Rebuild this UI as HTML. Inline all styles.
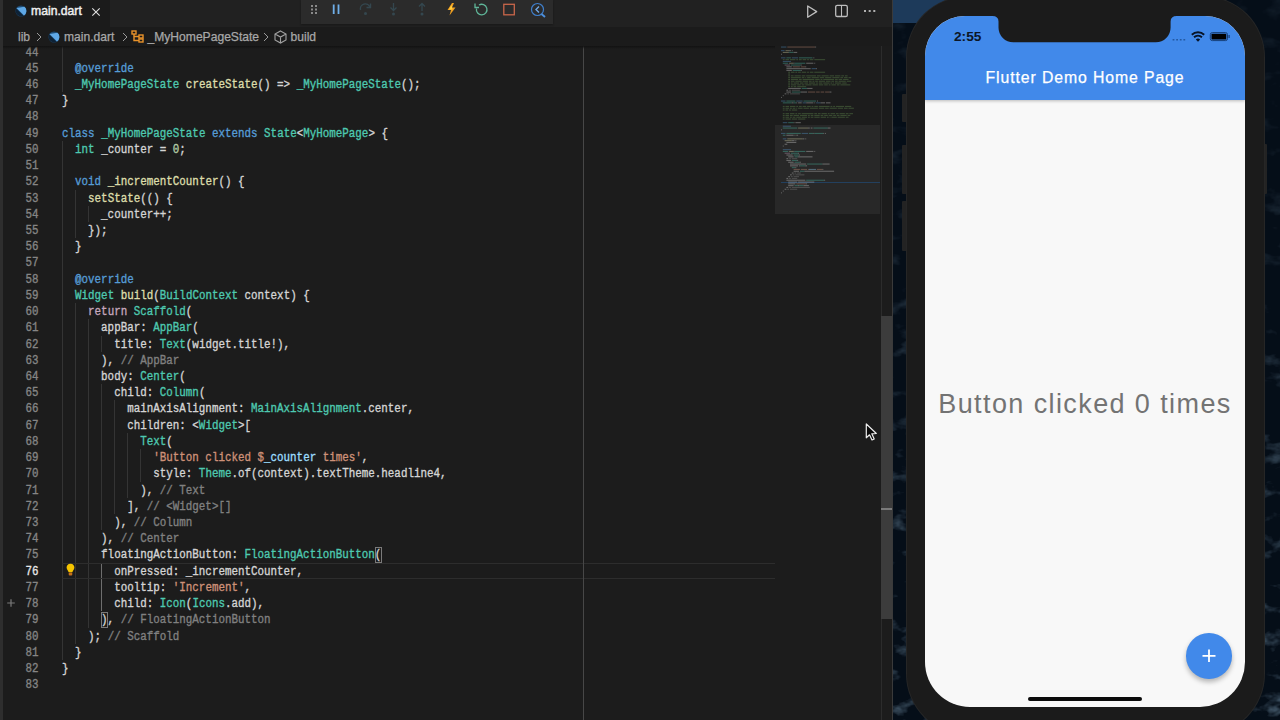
<!DOCTYPE html>
<html><head><meta charset="utf-8">
<style>
html,body{margin:0;padding:0;width:1280px;height:720px;overflow:hidden;background:#07131f;}
*{box-sizing:border-box;}
#desk{position:absolute;left:893px;top:0;width:387px;height:720px;background:#071422;overflow:hidden;}
#vsc{position:absolute;left:0;top:0;width:893px;height:720px;background:#1c1c1c;overflow:hidden;font-family:"Liberation Sans",sans-serif;}
#lstrip{position:absolute;left:0;top:0;width:3px;height:720px;background:#2e2e2e;}
#tabbar{position:absolute;left:3px;top:0;width:890px;height:27px;background:#212121;}
#tab{position:absolute;left:3px;top:0;width:107px;height:27px;background:#1b1b1b;}
#tab .name{position:absolute;left:28px;top:3.5px;font-size:12.2px;color:#eeeeee;font-weight:normal;-webkit-text-stroke:0.45px;letter-spacing:0px;}
#crumb{position:absolute;left:3px;top:27px;width:890px;height:19px;background:#1b1b1b;}
.crumbtxt{position:absolute;top:2.5px;font-size:12.1px;color:#a8a8a8;white-space:pre;-webkit-text-stroke:0.25px;}
#dbg{position:absolute;left:301px;top:0;width:252px;height:23.5px;background:#2b2b2b;box-shadow:0 1px 2px rgba(0,0,0,.3);}
#editor{position:absolute;left:0;top:46px;width:893px;height:674px;background:#1c1c1c;overflow:hidden;}
#code{position:absolute;left:0;top:-46px;width:893px;height:720px;}
.ln{position:absolute;left:62px;height:16.22px;line-height:16.22px;transform:translateY(1.1px) scaleY(1.17);transform-origin:0 58%;font-family:"Liberation Mono",monospace;font-size:10.86px;color:#d4d4d4;white-space:pre;-webkit-text-stroke:0.3px;}
.num{position:absolute;left:0;width:38.5px;transform:translateY(1.1px) scaleY(1.17);transform-origin:0 58%;text-align:right;height:16.22px;line-height:16.22px;font-family:"Liberation Mono",monospace;font-size:10.83px;color:#858585;-webkit-text-stroke:0.3px;}
.num.cur{color:#e6e6e6;}
.k{color:#569cd6}.c{color:#c5a7bd}.t{color:#4ec9b0}.f{color:#dcdcaa}.s{color:#ce9178}.v{color:#9cdcfe}.g{color:#808080}.m{color:#6a9955}.n{color:#b5cea8}
.ig{position:absolute;width:1px;height:16.22px;background:#343434;}
.ig.act{background:#6e6e6e;}
#curline{position:absolute;left:62px;top:562.6px;width:713px;height:16.22px;border-top:1px solid #2d2d2d;border-bottom:1px solid #2d2d2d;}
.bbox{position:absolute;width:6.8px;height:16px;border:1px solid #7a7a7a;}
#ruler{position:absolute;left:583px;top:46px;width:1px;height:674px;background:#474747;}
#shadow{position:absolute;left:0;top:46px;width:775px;height:3px;background:linear-gradient(#121212,rgba(28,28,28,0));}
#mmslider{position:absolute;left:775px;top:124.7px;width:105px;height:89px;background:rgba(255,255,255,0.055);}
#mmcur{position:absolute;left:781px;top:181.6px;width:99px;height:1.3px;background:#23405e;}
#sbline{position:absolute;left:880.5px;top:46px;width:1px;height:674px;background:#2c2c2c;}
#sbthumb{position:absolute;left:881px;top:315.7px;width:11px;height:303px;background:#3c3c3c;}
#sbcursor{position:absolute;left:881px;top:508px;width:11px;height:1.5px;background:#7a7a7a;}
#redge{position:absolute;left:892px;top:0;width:1px;height:720px;background:#3a3a3a;}
#phone{position:absolute;left:907px;top:-3.5px;width:356.5px;height:737.5px;border-radius:60px;background:#1b1b1b;box-shadow:0 0 0 1px #262626;}
.btn{position:absolute;background:#232323;border-radius:1px;}
#screen{position:absolute;left:925px;top:15.5px;width:320px;height:691.3px;border-radius:40px 40px 45px 45px;background:#f8f8f8;overflow:hidden;}
#appbar{position:absolute;left:0;top:0;width:100%;height:84px;background:#4189ea;box-shadow:0 1px 3px rgba(0,0,0,.25);}
#notch{position:absolute;left:72px;top:-2px;width:175.6px;height:28.3px;background:#1b1b1b;border-radius:0 0 17px 17px;}
#title{position:absolute;left:0;width:100%;top:53px;text-align:center;color:#fff;font-size:15.8px;letter-spacing:0.9px;-webkit-text-stroke:0.25px;font-family:"Liberation Sans",sans-serif;}
#time{position:absolute;left:29px;top:13.2px;font-size:13.7px;font-weight:bold;color:#0c1626;font-family:"Liberation Sans",sans-serif;}
#msg{position:absolute;left:0;width:100%;top:373px;text-align:center;color:#737373;font-size:27px;letter-spacing:1.4px;font-family:"Liberation Sans",sans-serif;}
#fab{position:absolute;left:261px;top:617.8px;width:45.6px;height:45.6px;border-radius:50%;background:#4189ea;box-shadow:0 3px 5px rgba(0,0,0,.28);}
#home{position:absolute;left:103.4px;top:681px;width:113.5px;height:4px;border-radius:2px;background:#0a0a0a;}
#cursor{position:absolute;left:864px;top:421.8px;}
</style></head><body>
<div id="desk">
  <svg width="387" height="720" style="position:absolute;left:0;top:0">
    <defs>
      <filter id="tex" x="0" y="0" width="100%" height="100%">
        <feTurbulence type="fractalNoise" baseFrequency="0.035 0.06" numOctaves="4" seed="7" result="n"/>
        <feColorMatrix in="n" type="matrix" values="0 0 0 0 0.16  0 0 0 0 0.26  0 0 0 0 0.36  0 0 0 3.2 -1.75"/>
      </filter>
      <filter id="bl" x="-50%" y="-50%" width="200%" height="200%"><feGaussianBlur stdDeviation="6"/></filter>
    </defs>
    <rect x="0" y="0" width="387" height="720" fill="#050e18"/>
    <mask id="mk"><rect x="0" y="0" width="387" height="720" fill="url(#mg)"/></mask>
    <linearGradient id="mg" x1="0" y1="0" x2="0" y2="1"><stop offset="0" stop-color="#fff" stop-opacity="0.15"/><stop offset="0.4" stop-color="#fff" stop-opacity="0.35"/><stop offset="0.75" stop-color="#fff" stop-opacity="0.8"/><stop offset="1" stop-color="#fff" stop-opacity="1"/></linearGradient>
    <rect x="0" y="0" width="387" height="720" filter="url(#tex)" opacity="0.7" mask="url(#mk)"/>
    <polygon points="0,0 120,0 60,23 0,23" fill="#1d3a5a"/>
  </svg>
</div>
<div id="vsc">
  <div id="tabbar"></div>
  <div id="tab">
    <svg style="position:absolute;left:12px;top:5px" width="12" height="12" viewBox="0 0 12 12">
      <circle cx="6" cy="6" r="5.5" fill="#1d4a72"/>
      <path d="M1.5 3 L9 10.5 A5.5 5.5 0 0 0 9.5 1.8 Z" fill="#5fa8e6"/>
      <path d="M1.2 3.5 L8.5 10.8 A5.5 5.5 0 0 1 1.2 3.5Z" fill="#0e2236"/>
    </svg>
    <div class="name">main.dart</div>
    <svg style="position:absolute;left:88px;top:6.5px" width="10" height="10" viewBox="0 0 10 10"><path d="M1.3 1.3L8.7 8.7M8.7 1.3L1.3 8.7" stroke="#e0e0e0" stroke-width="1.1"/></svg>
  </div>
  <div id="dbg">
    <svg width="252" height="24" style="position:absolute;left:0;top:0">
      <g fill="#8a8a8a"><rect x="10" y="5" width="2" height="2"/><rect x="14" y="5" width="2" height="2"/><rect x="10" y="8.5" width="2" height="2"/><rect x="14" y="8.5" width="2" height="2"/><rect x="10" y="12" width="2" height="2"/><rect x="14" y="12" width="2" height="2"/></g>
      <g fill="#6faee8"><rect x="31.8" y="4.5" width="1.8" height="9.5"/><rect x="36.6" y="4.5" width="1.8" height="9.5"/></g>
      <g stroke="#34474f" fill="none" stroke-width="1.4"><path d="M59.5 10 A5 5 0 0 1 69 7"/><path d="M69.5 3.5 V7.5 H65.5"/></g><circle cx="64.5" cy="13.5" r="1.5" fill="#34474f"/>
      <g stroke="#34474f" fill="none" stroke-width="1.3"><path d="M92.5 3 V10 M89.5 7.5 L92.5 10.5 L95.5 7.5"/></g><circle cx="92.5" cy="14" r="1.5" fill="#34474f"/>
      <g stroke="#34474f" fill="none" stroke-width="1.3"><path d="M121 11 V4 M118 6.5 L121 3.5 L124 6.5"/></g><circle cx="121" cy="14" r="1.5" fill="#34474f"/>
      <path d="M151 3 L146.5 10 H150 L148.5 15.5 L154.5 7.5 H151 L153 3Z" fill="#f0a020"/>
      <path d="M150.5 5 L148 9.5 H151.5Z" fill="#ffd040"/>
      <g stroke="#5fb598" fill="none" stroke-width="1.3"><path d="M175.5 8.5 A5.3 5.3 0 1 0 178 5"/><path d="M174 3.5 V7.5 H178"/></g>
      <rect x="202.8" y="4.3" width="10.5" height="10.5" fill="none" stroke="#c9664a" stroke-width="1.3"/>
      <circle cx="236.5" cy="9.5" r="6" fill="none" stroke="#3f7fcc" stroke-width="1.2"/>
      <path d="M238 6.5 L235 9.5 L238 12.5" stroke="#6fa8e8" fill="none" stroke-width="1.4"/>
      <path d="M240.5 14 L244 17" stroke="#4c8fdc" stroke-width="2"/>
    </svg>
  </div>
  <div id="crumb">
    <div class="crumbtxt" style="left:15px">lib</div>
    <svg style="position:absolute;left:32px;top:5px" width="8" height="10" viewBox="0 0 8 10"><path d="M2 1 L6 5 L2 9" stroke="#9a9a9a" fill="none" stroke-width="1"/></svg>
    <svg style="position:absolute;left:45px;top:4px" width="12" height="12" viewBox="0 0 12 12">
      <circle cx="6" cy="6" r="5.5" fill="#1d4a72"/>
      <path d="M1.5 3 L9 10.5 A5.5 5.5 0 0 0 9.5 1.8 Z" fill="#5fa8e6"/>
      <path d="M1.2 3.5 L8.5 10.8 A5.5 5.5 0 0 1 1.2 3.5Z" fill="#0e2236"/>
    </svg>
    <div class="crumbtxt" style="left:61px">main.dart</div>
    <svg style="position:absolute;left:118px;top:5px" width="8" height="10" viewBox="0 0 8 10"><path d="M2 1 L6 5 L2 9" stroke="#9a9a9a" fill="none" stroke-width="1"/></svg>
    <svg style="position:absolute;left:128px;top:3px" width="14" height="13" viewBox="0 0 14 13">
      <g stroke="#e8922a" fill="none" stroke-width="1.4"><rect x="1" y="1" width="4" height="3"/><rect x="8" y="5" width="4" height="3"/><rect x="8" y="9" width="4" height="3"/><path d="M3 4 V10.5 H8 M3 6.5 H8"/></g>
    </svg>
    <div class="crumbtxt" style="left:144.5px">_MyHomePageState</div>
    <svg style="position:absolute;left:259px;top:5px" width="8" height="10" viewBox="0 0 8 10"><path d="M2 1 L6 5 L2 9" stroke="#9a9a9a" fill="none" stroke-width="1"/></svg>
    <svg style="position:absolute;left:271px;top:3px" width="13" height="14" viewBox="0 0 13 14">
      <g stroke="#a0a0a0" fill="none" stroke-width="1.1"><path d="M6.5 1 L12 4 V10 L6.5 13 L1 10 V4Z M1 4 L6.5 7 L12 4 M6.5 7 V13"/></g>
    </svg>
    <div class="crumbtxt" style="left:287.5px">build</div>
  </div>
  <div id="tabicons">
    <svg width="80" height="24" style="position:absolute;left:800px;top:0">
      <path d="M7.7 6 L16.7 11.6 L7.7 17.2Z" fill="none" stroke="#bdbdbd" stroke-width="1.3" stroke-linejoin="round"/>
      <rect x="35.7" y="5.3" width="11.6" height="11.2" rx="1.6" fill="none" stroke="#bdbdbd" stroke-width="1.3"/>
      <path d="M41.5 5.3 V16.5" stroke="#bdbdbd" stroke-width="1.1"/>
      <g fill="#b0b0b0"><rect x="64" y="10" width="2" height="2"/><rect x="68.7" y="10" width="2" height="2"/><rect x="73.3" y="10" width="2" height="2"/></g>
    </svg>
  </div>
  <div id="editor"><div id="code">
<div class="ig" style="left:62.0px;top:43.60px"></div>
<div class="ig" style="left:62.0px;top:59.82px"></div>
<div class="ig" style="left:62.0px;top:76.04px"></div>
<div class="ig" style="left:62.0px;top:140.92px"></div>
<div class="ig" style="left:62.0px;top:157.14px"></div>
<div class="ig" style="left:62.0px;top:173.36px"></div>
<div class="ig" style="left:62.0px;top:189.58px"></div>
<div class="ig" style="left:75.0px;top:189.58px"></div>
<div class="ig" style="left:62.0px;top:205.80px"></div>
<div class="ig" style="left:75.0px;top:205.80px"></div>
<div class="ig" style="left:88.0px;top:205.80px"></div>
<div class="ig" style="left:62.0px;top:222.02px"></div>
<div class="ig" style="left:75.0px;top:222.02px"></div>
<div class="ig" style="left:62.0px;top:238.24px"></div>
<div class="ig" style="left:62.0px;top:254.46px"></div>
<div class="ig" style="left:62.0px;top:270.68px"></div>
<div class="ig" style="left:62.0px;top:286.90px"></div>
<div class="ig" style="left:62.0px;top:303.12px"></div>
<div class="ig" style="left:75.0px;top:303.12px"></div>
<div class="ig" style="left:62.0px;top:319.34px"></div>
<div class="ig" style="left:75.0px;top:319.34px"></div>
<div class="ig" style="left:88.0px;top:319.34px"></div>
<div class="ig" style="left:62.0px;top:335.56px"></div>
<div class="ig" style="left:75.0px;top:335.56px"></div>
<div class="ig" style="left:88.0px;top:335.56px"></div>
<div class="ig" style="left:101.0px;top:335.56px"></div>
<div class="ig" style="left:62.0px;top:351.78px"></div>
<div class="ig" style="left:75.0px;top:351.78px"></div>
<div class="ig" style="left:88.0px;top:351.78px"></div>
<div class="ig" style="left:62.0px;top:368.00px"></div>
<div class="ig" style="left:75.0px;top:368.00px"></div>
<div class="ig" style="left:88.0px;top:368.00px"></div>
<div class="ig" style="left:62.0px;top:384.22px"></div>
<div class="ig" style="left:75.0px;top:384.22px"></div>
<div class="ig" style="left:88.0px;top:384.22px"></div>
<div class="ig" style="left:101.0px;top:384.22px"></div>
<div class="ig" style="left:62.0px;top:400.44px"></div>
<div class="ig" style="left:75.0px;top:400.44px"></div>
<div class="ig" style="left:88.0px;top:400.44px"></div>
<div class="ig" style="left:101.0px;top:400.44px"></div>
<div class="ig" style="left:114.0px;top:400.44px"></div>
<div class="ig" style="left:62.0px;top:416.66px"></div>
<div class="ig" style="left:75.0px;top:416.66px"></div>
<div class="ig" style="left:88.0px;top:416.66px"></div>
<div class="ig" style="left:101.0px;top:416.66px"></div>
<div class="ig" style="left:114.0px;top:416.66px"></div>
<div class="ig" style="left:62.0px;top:432.88px"></div>
<div class="ig" style="left:75.0px;top:432.88px"></div>
<div class="ig" style="left:88.0px;top:432.88px"></div>
<div class="ig" style="left:101.0px;top:432.88px"></div>
<div class="ig" style="left:114.0px;top:432.88px"></div>
<div class="ig" style="left:127.0px;top:432.88px"></div>
<div class="ig" style="left:62.0px;top:449.10px"></div>
<div class="ig" style="left:75.0px;top:449.10px"></div>
<div class="ig" style="left:88.0px;top:449.10px"></div>
<div class="ig" style="left:101.0px;top:449.10px"></div>
<div class="ig" style="left:114.0px;top:449.10px"></div>
<div class="ig" style="left:127.0px;top:449.10px"></div>
<div class="ig" style="left:140.0px;top:449.10px"></div>
<div class="ig" style="left:62.0px;top:465.32px"></div>
<div class="ig" style="left:75.0px;top:465.32px"></div>
<div class="ig" style="left:88.0px;top:465.32px"></div>
<div class="ig" style="left:101.0px;top:465.32px"></div>
<div class="ig" style="left:114.0px;top:465.32px"></div>
<div class="ig" style="left:127.0px;top:465.32px"></div>
<div class="ig" style="left:140.0px;top:465.32px"></div>
<div class="ig" style="left:62.0px;top:481.54px"></div>
<div class="ig" style="left:75.0px;top:481.54px"></div>
<div class="ig" style="left:88.0px;top:481.54px"></div>
<div class="ig" style="left:101.0px;top:481.54px"></div>
<div class="ig" style="left:114.0px;top:481.54px"></div>
<div class="ig" style="left:127.0px;top:481.54px"></div>
<div class="ig" style="left:62.0px;top:497.76px"></div>
<div class="ig" style="left:75.0px;top:497.76px"></div>
<div class="ig" style="left:88.0px;top:497.76px"></div>
<div class="ig" style="left:101.0px;top:497.76px"></div>
<div class="ig" style="left:114.0px;top:497.76px"></div>
<div class="ig" style="left:62.0px;top:513.98px"></div>
<div class="ig" style="left:75.0px;top:513.98px"></div>
<div class="ig" style="left:88.0px;top:513.98px"></div>
<div class="ig" style="left:101.0px;top:513.98px"></div>
<div class="ig" style="left:62.0px;top:530.20px"></div>
<div class="ig" style="left:75.0px;top:530.20px"></div>
<div class="ig" style="left:88.0px;top:530.20px"></div>
<div class="ig" style="left:62.0px;top:546.42px"></div>
<div class="ig" style="left:75.0px;top:546.42px"></div>
<div class="ig" style="left:88.0px;top:546.42px"></div>
<div class="ig" style="left:62.0px;top:562.64px"></div>
<div class="ig" style="left:75.0px;top:562.64px"></div>
<div class="ig" style="left:88.0px;top:562.64px"></div>
<div class="ig act" style="left:101.0px;top:562.64px"></div>
<div class="ig" style="left:62.0px;top:578.86px"></div>
<div class="ig" style="left:75.0px;top:578.86px"></div>
<div class="ig" style="left:88.0px;top:578.86px"></div>
<div class="ig act" style="left:101.0px;top:578.86px"></div>
<div class="ig" style="left:62.0px;top:595.08px"></div>
<div class="ig" style="left:75.0px;top:595.08px"></div>
<div class="ig" style="left:88.0px;top:595.08px"></div>
<div class="ig act" style="left:101.0px;top:595.08px"></div>
<div class="ig" style="left:62.0px;top:611.30px"></div>
<div class="ig" style="left:75.0px;top:611.30px"></div>
<div class="ig" style="left:88.0px;top:611.30px"></div>
<div class="ig" style="left:62.0px;top:627.52px"></div>
<div class="ig" style="left:75.0px;top:627.52px"></div>
<div class="ig" style="left:62.0px;top:643.74px"></div>
<div id="curline"></div>
<div class="bbox" style="left:374.8px;top:546.6px"></div>
<div class="bbox" style="left:101.3px;top:611.5px"></div>
<div class="ln" style="top:43.60px"></div>
<div class="num" style="top:43.60px">44</div>
<div class="ln" style="top:59.82px">  <span class="k">@override</span></div>
<div class="num" style="top:59.82px">45</div>
<div class="ln" style="top:76.04px">  <span class="t">_MyHomePageState</span> <span class="f">createState</span>() =&gt; <span class="t">_MyHomePageState</span>();</div>
<div class="num" style="top:76.04px">46</div>
<div class="ln" style="top:92.26px">}</div>
<div class="num" style="top:92.26px">47</div>
<div class="ln" style="top:108.48px"></div>
<div class="num" style="top:108.48px">48</div>
<div class="ln" style="top:124.70px"><span class="k">class</span> <span class="t">_MyHomePageState</span> <span class="k">extends</span> <span class="t">State</span>&lt;<span class="t">MyHomePage</span>&gt; {</div>
<div class="num" style="top:124.70px">49</div>
<div class="ln" style="top:140.92px">  <span class="t">int</span> _counter = <span class="n">0</span>;</div>
<div class="num" style="top:140.92px">50</div>
<div class="ln" style="top:157.14px"></div>
<div class="num" style="top:157.14px">51</div>
<div class="ln" style="top:173.36px">  <span class="k">void</span> <span class="f">_incrementCounter</span>() {</div>
<div class="num" style="top:173.36px">52</div>
<div class="ln" style="top:189.58px">    <span class="f">setState</span>(() {</div>
<div class="num" style="top:189.58px">53</div>
<div class="ln" style="top:205.80px">      _counter++;</div>
<div class="num" style="top:205.80px">54</div>
<div class="ln" style="top:222.02px">    });</div>
<div class="num" style="top:222.02px">55</div>
<div class="ln" style="top:238.24px">  }</div>
<div class="num" style="top:238.24px">56</div>
<div class="ln" style="top:254.46px"></div>
<div class="num" style="top:254.46px">57</div>
<div class="ln" style="top:270.68px">  <span class="k">@override</span></div>
<div class="num" style="top:270.68px">58</div>
<div class="ln" style="top:286.90px">  <span class="t">Widget</span> <span class="f">build</span>(<span class="t">BuildContext</span> context) {</div>
<div class="num" style="top:286.90px">59</div>
<div class="ln" style="top:303.12px">    <span class="c">return</span> <span class="t">Scaffold</span>(</div>
<div class="num" style="top:303.12px">60</div>
<div class="ln" style="top:319.34px">      appBar: <span class="t">AppBar</span>(</div>
<div class="num" style="top:319.34px">61</div>
<div class="ln" style="top:335.56px">        title: <span class="t">Text</span>(widget.title!),</div>
<div class="num" style="top:335.56px">62</div>
<div class="ln" style="top:351.78px">      ), <span class="g">// AppBar</span></div>
<div class="num" style="top:351.78px">63</div>
<div class="ln" style="top:368.00px">      body: <span class="t">Center</span>(</div>
<div class="num" style="top:368.00px">64</div>
<div class="ln" style="top:384.22px">        child: <span class="t">Column</span>(</div>
<div class="num" style="top:384.22px">65</div>
<div class="ln" style="top:400.44px">          mainAxisAlignment: <span class="t">MainAxisAlignment</span>.center,</div>
<div class="num" style="top:400.44px">66</div>
<div class="ln" style="top:416.66px">          children: &lt;<span class="t">Widget</span>&gt;[</div>
<div class="num" style="top:416.66px">67</div>
<div class="ln" style="top:432.88px">            <span class="t">Text</span>(</div>
<div class="num" style="top:432.88px">68</div>
<div class="ln" style="top:449.10px">              <span class="s">&#x27;Button clicked $</span><span class="v">_counter</span><span class="s"> times&#x27;</span>,</div>
<div class="num" style="top:449.10px">69</div>
<div class="ln" style="top:465.32px">              style: <span class="t">Theme</span>.of(context).textTheme.headline4,</div>
<div class="num" style="top:465.32px">70</div>
<div class="ln" style="top:481.54px">            ), <span class="g">// Text</span></div>
<div class="num" style="top:481.54px">71</div>
<div class="ln" style="top:497.76px">          ], <span class="g">// &lt;Widget&gt;[]</span></div>
<div class="num" style="top:497.76px">72</div>
<div class="ln" style="top:513.98px">        ), <span class="g">// Column</span></div>
<div class="num" style="top:513.98px">73</div>
<div class="ln" style="top:530.20px">      ), <span class="g">// Center</span></div>
<div class="num" style="top:530.20px">74</div>
<div class="ln" style="top:546.42px">      floatingActionButton: <span class="t">FloatingActionButton</span>(</div>
<div class="num" style="top:546.42px">75</div>
<div class="ln" style="top:562.64px">        onPressed: _incrementCounter,</div>
<div class="num cur" style="top:562.64px">76</div>
<div class="ln" style="top:578.86px">        tooltip: <span class="s">&#x27;Increment&#x27;</span>,</div>
<div class="num" style="top:578.86px">77</div>
<div class="ln" style="top:595.08px">        child: <span class="t">Icon</span>(<span class="t">Icons</span>.add),</div>
<div class="num" style="top:595.08px">78</div>
<div class="ln" style="top:611.30px">      ), <span class="g">// FloatingActionButton</span></div>
<div class="num" style="top:611.30px">79</div>
<div class="ln" style="top:627.52px">    ); <span class="g">// Scaffold</span></div>
<div class="num" style="top:627.52px">80</div>
<div class="ln" style="top:643.74px">  }</div>
<div class="num" style="top:643.74px">81</div>
<div class="ln" style="top:659.96px">}</div>
<div class="num" style="top:659.96px">82</div>
<div class="ln" style="top:676.18px"></div>
<div class="num" style="top:676.18px">83</div>
  </div></div>
  <div id="ruler"></div>
  <div id="shadow"></div>
  <div id="mmslider"></div>
  <div id="mmcur"></div>
  <svg width="893" height="720" style="position:absolute;left:0;top:0;opacity:0.36">
<rect x="781.00" y="46.50" width="5.40" height="1.1" fill="#569cd6"/>
<rect x="787.30" y="46.50" width="27.90" height="1.1" fill="#ce9178"/>
<rect x="815.20" y="46.50" width="0.90" height="1.1" fill="#d4d4d4"/>
<rect x="781.00" y="50.10" width="3.60" height="1.1" fill="#569cd6"/>
<rect x="785.50" y="50.10" width="3.60" height="1.1" fill="#dcdcaa"/>
<rect x="789.10" y="50.10" width="1.80" height="1.1" fill="#d4d4d4"/>
<rect x="791.80" y="50.10" width="0.90" height="1.1" fill="#d4d4d4"/>
<rect x="782.80" y="51.90" width="5.40" height="1.1" fill="#dcdcaa"/>
<rect x="788.20" y="51.90" width="0.90" height="1.1" fill="#d4d4d4"/>
<rect x="789.10" y="51.90" width="4.50" height="1.1" fill="#4ec9b0"/>
<rect x="793.60" y="51.90" width="3.60" height="1.1" fill="#d4d4d4"/>
<rect x="781.00" y="53.70" width="0.90" height="1.1" fill="#d4d4d4"/>
<rect x="781.00" y="57.30" width="4.50" height="1.1" fill="#569cd6"/>
<rect x="786.40" y="57.30" width="4.50" height="1.1" fill="#4ec9b0"/>
<rect x="791.80" y="57.30" width="6.30" height="1.1" fill="#569cd6"/>
<rect x="799.00" y="57.30" width="13.50" height="1.1" fill="#4ec9b0"/>
<rect x="813.40" y="57.30" width="0.90" height="1.1" fill="#d4d4d4"/>
<rect x="782.80" y="59.10" width="1.80" height="1.1" fill="#6a9955"/>
<rect x="785.50" y="59.10" width="3.60" height="1.1" fill="#6a9955"/>
<rect x="790.00" y="59.10" width="5.40" height="1.1" fill="#6a9955"/>
<rect x="796.30" y="59.10" width="1.80" height="1.1" fill="#6a9955"/>
<rect x="799.00" y="59.10" width="2.70" height="1.1" fill="#6a9955"/>
<rect x="802.60" y="59.10" width="3.60" height="1.1" fill="#6a9955"/>
<rect x="807.10" y="59.10" width="1.80" height="1.1" fill="#6a9955"/>
<rect x="809.80" y="59.10" width="3.60" height="1.1" fill="#6a9955"/>
<rect x="814.30" y="59.10" width="10.80" height="1.1" fill="#6a9955"/>
<rect x="782.80" y="60.90" width="8.10" height="1.1" fill="#569cd6"/>
<rect x="782.80" y="62.70" width="5.40" height="1.1" fill="#4ec9b0"/>
<rect x="789.10" y="62.70" width="4.50" height="1.1" fill="#dcdcaa"/>
<rect x="793.60" y="62.70" width="0.90" height="1.1" fill="#d4d4d4"/>
<rect x="794.50" y="62.70" width="10.80" height="1.1" fill="#4ec9b0"/>
<rect x="806.20" y="62.70" width="7.20" height="1.1" fill="#d4d4d4"/>
<rect x="814.30" y="62.70" width="0.90" height="1.1" fill="#d4d4d4"/>
<rect x="784.60" y="64.50" width="5.40" height="1.1" fill="#c6a0c0"/>
<rect x="790.90" y="64.50" width="9.90" height="1.1" fill="#4ec9b0"/>
<rect x="800.80" y="64.50" width="0.90" height="1.1" fill="#d4d4d4"/>
<rect x="786.40" y="66.30" width="5.40" height="1.1" fill="#d4d4d4"/>
<rect x="792.70" y="66.30" width="7.20" height="1.1" fill="#ce9178"/>
<rect x="800.80" y="66.30" width="4.50" height="1.1" fill="#ce9178"/>
<rect x="805.30" y="66.30" width="0.90" height="1.1" fill="#d4d4d4"/>
<rect x="786.40" y="68.10" width="24.30" height="1.1" fill="#d4d4d4"/>
<rect x="811.60" y="68.10" width="4.50" height="1.1" fill="#569cd6"/>
<rect x="816.10" y="68.10" width="0.90" height="1.1" fill="#d4d4d4"/>
<rect x="786.40" y="69.90" width="5.40" height="1.1" fill="#d4d4d4"/>
<rect x="792.70" y="69.90" width="8.10" height="1.1" fill="#4ec9b0"/>
<rect x="800.80" y="69.90" width="0.90" height="1.1" fill="#d4d4d4"/>
<rect x="788.20" y="71.70" width="1.80" height="1.1" fill="#6a9955"/>
<rect x="790.90" y="71.70" width="3.60" height="1.1" fill="#6a9955"/>
<rect x="795.40" y="71.70" width="1.80" height="1.1" fill="#6a9955"/>
<rect x="798.10" y="71.70" width="2.70" height="1.1" fill="#6a9955"/>
<rect x="801.70" y="71.70" width="4.50" height="1.1" fill="#6a9955"/>
<rect x="807.10" y="71.70" width="1.80" height="1.1" fill="#6a9955"/>
<rect x="809.80" y="71.70" width="3.60" height="1.1" fill="#6a9955"/>
<rect x="814.30" y="71.70" width="10.80" height="1.1" fill="#6a9955"/>
<rect x="788.20" y="73.50" width="1.80" height="1.1" fill="#6a9955"/>
<rect x="788.20" y="75.30" width="1.80" height="1.1" fill="#6a9955"/>
<rect x="790.90" y="75.30" width="2.70" height="1.1" fill="#6a9955"/>
<rect x="794.50" y="75.30" width="6.30" height="1.1" fill="#6a9955"/>
<rect x="801.70" y="75.30" width="3.60" height="1.1" fill="#6a9955"/>
<rect x="806.20" y="75.30" width="9.90" height="1.1" fill="#6a9955"/>
<rect x="817.00" y="75.30" width="3.60" height="1.1" fill="#6a9955"/>
<rect x="821.50" y="75.30" width="7.20" height="1.1" fill="#6a9955"/>
<rect x="829.60" y="75.30" width="4.50" height="1.1" fill="#6a9955"/>
<rect x="835.00" y="75.30" width="5.40" height="1.1" fill="#6a9955"/>
<rect x="841.30" y="75.30" width="2.70" height="1.1" fill="#6a9955"/>
<rect x="844.90" y="75.30" width="2.70" height="1.1" fill="#6a9955"/>
<rect x="788.20" y="77.10" width="1.80" height="1.1" fill="#6a9955"/>
<rect x="790.90" y="77.10" width="9.90" height="1.1" fill="#6a9955"/>
<rect x="801.70" y="77.10" width="2.70" height="1.1" fill="#6a9955"/>
<rect x="805.30" y="77.10" width="0.90" height="1.1" fill="#6a9955"/>
<rect x="807.10" y="77.10" width="3.60" height="1.1" fill="#6a9955"/>
<rect x="811.60" y="77.10" width="7.20" height="1.1" fill="#6a9955"/>
<rect x="819.70" y="77.10" width="4.50" height="1.1" fill="#6a9955"/>
<rect x="825.10" y="77.10" width="6.30" height="1.1" fill="#6a9955"/>
<rect x="832.30" y="77.10" width="7.20" height="1.1" fill="#6a9955"/>
<rect x="840.40" y="77.10" width="2.70" height="1.1" fill="#6a9955"/>
<rect x="844.00" y="77.10" width="3.60" height="1.1" fill="#6a9955"/>
<rect x="848.50" y="77.10" width="2.70" height="1.1" fill="#6a9955"/>
<rect x="788.20" y="78.90" width="1.80" height="1.1" fill="#6a9955"/>
<rect x="790.90" y="78.90" width="7.20" height="1.1" fill="#6a9955"/>
<rect x="799.00" y="78.90" width="2.70" height="1.1" fill="#6a9955"/>
<rect x="802.60" y="78.90" width="11.70" height="1.1" fill="#6a9955"/>
<rect x="815.20" y="78.90" width="4.50" height="1.1" fill="#6a9955"/>
<rect x="820.60" y="78.90" width="1.80" height="1.1" fill="#6a9955"/>
<rect x="823.30" y="78.90" width="10.80" height="1.1" fill="#6a9955"/>
<rect x="835.00" y="78.90" width="2.70" height="1.1" fill="#6a9955"/>
<rect x="838.60" y="78.90" width="3.60" height="1.1" fill="#6a9955"/>
<rect x="843.10" y="78.90" width="5.40" height="1.1" fill="#6a9955"/>
<rect x="788.20" y="80.70" width="1.80" height="1.1" fill="#6a9955"/>
<rect x="790.90" y="80.70" width="3.60" height="1.1" fill="#6a9955"/>
<rect x="795.40" y="80.70" width="6.30" height="1.1" fill="#6a9955"/>
<rect x="802.60" y="80.70" width="5.40" height="1.1" fill="#6a9955"/>
<rect x="808.90" y="80.70" width="2.70" height="1.1" fill="#6a9955"/>
<rect x="812.50" y="80.70" width="1.80" height="1.1" fill="#6a9955"/>
<rect x="815.20" y="80.70" width="2.70" height="1.1" fill="#6a9955"/>
<rect x="818.80" y="80.70" width="6.30" height="1.1" fill="#6a9955"/>
<rect x="826.00" y="80.70" width="4.50" height="1.1" fill="#6a9955"/>
<rect x="831.40" y="80.70" width="2.70" height="1.1" fill="#6a9955"/>
<rect x="835.00" y="80.70" width="2.70" height="1.1" fill="#6a9955"/>
<rect x="838.60" y="80.70" width="7.20" height="1.1" fill="#6a9955"/>
<rect x="846.70" y="80.70" width="4.50" height="1.1" fill="#6a9955"/>
<rect x="788.20" y="82.50" width="1.80" height="1.1" fill="#6a9955"/>
<rect x="790.90" y="82.50" width="1.80" height="1.1" fill="#6a9955"/>
<rect x="793.60" y="82.50" width="5.40" height="1.1" fill="#6a9955"/>
<rect x="799.90" y="82.50" width="3.60" height="1.1" fill="#6a9955"/>
<rect x="804.40" y="82.50" width="3.60" height="1.1" fill="#6a9955"/>
<rect x="808.90" y="82.50" width="6.30" height="1.1" fill="#6a9955"/>
<rect x="816.10" y="82.50" width="1.80" height="1.1" fill="#6a9955"/>
<rect x="818.80" y="82.50" width="3.60" height="1.1" fill="#6a9955"/>
<rect x="823.30" y="82.50" width="6.30" height="1.1" fill="#6a9955"/>
<rect x="830.50" y="82.50" width="1.80" height="1.1" fill="#6a9955"/>
<rect x="833.20" y="82.50" width="0.90" height="1.1" fill="#6a9955"/>
<rect x="835.00" y="82.50" width="6.30" height="1.1" fill="#6a9955"/>
<rect x="842.20" y="82.50" width="4.50" height="1.1" fill="#6a9955"/>
<rect x="788.20" y="84.30" width="1.80" height="1.1" fill="#6a9955"/>
<rect x="790.90" y="84.30" width="5.40" height="1.1" fill="#6a9955"/>
<rect x="797.20" y="84.30" width="3.60" height="1.1" fill="#6a9955"/>
<rect x="801.70" y="84.30" width="2.70" height="1.1" fill="#6a9955"/>
<rect x="805.30" y="84.30" width="6.30" height="1.1" fill="#6a9955"/>
<rect x="812.50" y="84.30" width="5.40" height="1.1" fill="#6a9955"/>
<rect x="818.80" y="84.30" width="4.50" height="1.1" fill="#6a9955"/>
<rect x="824.20" y="84.30" width="3.60" height="1.1" fill="#6a9955"/>
<rect x="828.70" y="84.30" width="1.80" height="1.1" fill="#6a9955"/>
<rect x="831.40" y="84.30" width="4.50" height="1.1" fill="#6a9955"/>
<rect x="836.80" y="84.30" width="2.70" height="1.1" fill="#6a9955"/>
<rect x="840.40" y="84.30" width="9.90" height="1.1" fill="#6a9955"/>
<rect x="788.20" y="86.10" width="1.80" height="1.1" fill="#6a9955"/>
<rect x="790.90" y="86.10" width="1.80" height="1.1" fill="#6a9955"/>
<rect x="793.60" y="86.10" width="2.70" height="1.1" fill="#6a9955"/>
<rect x="797.20" y="86.10" width="9.00" height="1.1" fill="#6a9955"/>
<rect x="788.20" y="87.90" width="12.60" height="1.1" fill="#d4d4d4"/>
<rect x="801.70" y="87.90" width="5.40" height="1.1" fill="#4ec9b0"/>
<rect x="807.10" y="87.90" width="5.40" height="1.1" fill="#d4d4d4"/>
<rect x="786.40" y="89.70" width="1.80" height="1.1" fill="#d4d4d4"/>
<rect x="789.10" y="89.70" width="1.80" height="1.1" fill="#8b8b8b"/>
<rect x="791.80" y="89.70" width="8.10" height="1.1" fill="#8b8b8b"/>
<rect x="786.40" y="91.50" width="4.50" height="1.1" fill="#d4d4d4"/>
<rect x="791.80" y="91.50" width="9.00" height="1.1" fill="#4ec9b0"/>
<rect x="800.80" y="91.50" width="6.30" height="1.1" fill="#d4d4d4"/>
<rect x="808.00" y="91.50" width="7.20" height="1.1" fill="#ce9178"/>
<rect x="816.10" y="91.50" width="3.60" height="1.1" fill="#ce9178"/>
<rect x="820.60" y="91.50" width="3.60" height="1.1" fill="#ce9178"/>
<rect x="825.10" y="91.50" width="4.50" height="1.1" fill="#ce9178"/>
<rect x="829.60" y="91.50" width="1.80" height="1.1" fill="#d4d4d4"/>
<rect x="784.60" y="93.30" width="1.80" height="1.1" fill="#d4d4d4"/>
<rect x="787.30" y="93.30" width="1.80" height="1.1" fill="#8b8b8b"/>
<rect x="790.00" y="93.30" width="9.90" height="1.1" fill="#8b8b8b"/>
<rect x="782.80" y="95.10" width="0.90" height="1.1" fill="#d4d4d4"/>
<rect x="781.00" y="96.90" width="0.90" height="1.1" fill="#d4d4d4"/>
<rect x="781.00" y="100.50" width="4.50" height="1.1" fill="#569cd6"/>
<rect x="786.40" y="100.50" width="9.00" height="1.1" fill="#4ec9b0"/>
<rect x="796.30" y="100.50" width="6.30" height="1.1" fill="#569cd6"/>
<rect x="803.50" y="100.50" width="12.60" height="1.1" fill="#4ec9b0"/>
<rect x="817.00" y="100.50" width="0.90" height="1.1" fill="#d4d4d4"/>
<rect x="782.80" y="102.30" width="9.00" height="1.1" fill="#4ec9b0"/>
<rect x="791.80" y="102.30" width="1.80" height="1.1" fill="#d4d4d4"/>
<rect x="793.60" y="102.30" width="2.70" height="1.1" fill="#4ec9b0"/>
<rect x="796.30" y="102.30" width="0.90" height="1.1" fill="#d4d4d4"/>
<rect x="798.10" y="102.30" width="3.60" height="1.1" fill="#d4d4d4"/>
<rect x="802.60" y="102.30" width="3.60" height="1.1" fill="#569cd6"/>
<rect x="806.20" y="102.30" width="7.20" height="1.1" fill="#d4d4d4"/>
<rect x="814.30" y="102.30" width="0.90" height="1.1" fill="#d4d4d4"/>
<rect x="816.10" y="102.30" width="4.50" height="1.1" fill="#569cd6"/>
<rect x="820.60" y="102.30" width="4.50" height="1.1" fill="#d4d4d4"/>
<rect x="826.00" y="102.30" width="4.50" height="1.1" fill="#d4d4d4"/>
<rect x="782.80" y="105.90" width="1.80" height="1.1" fill="#6a9955"/>
<rect x="785.50" y="105.90" width="3.60" height="1.1" fill="#6a9955"/>
<rect x="790.00" y="105.90" width="5.40" height="1.1" fill="#6a9955"/>
<rect x="796.30" y="105.90" width="1.80" height="1.1" fill="#6a9955"/>
<rect x="799.00" y="105.90" width="2.70" height="1.1" fill="#6a9955"/>
<rect x="802.60" y="105.90" width="3.60" height="1.1" fill="#6a9955"/>
<rect x="807.10" y="105.90" width="3.60" height="1.1" fill="#6a9955"/>
<rect x="811.60" y="105.90" width="1.80" height="1.1" fill="#6a9955"/>
<rect x="814.30" y="105.90" width="3.60" height="1.1" fill="#6a9955"/>
<rect x="818.80" y="105.90" width="10.80" height="1.1" fill="#6a9955"/>
<rect x="830.50" y="105.90" width="1.80" height="1.1" fill="#6a9955"/>
<rect x="833.20" y="105.90" width="1.80" height="1.1" fill="#6a9955"/>
<rect x="835.90" y="105.90" width="8.10" height="1.1" fill="#6a9955"/>
<rect x="844.90" y="105.90" width="6.30" height="1.1" fill="#6a9955"/>
<rect x="782.80" y="107.70" width="1.80" height="1.1" fill="#6a9955"/>
<rect x="785.50" y="107.70" width="3.60" height="1.1" fill="#6a9955"/>
<rect x="790.00" y="107.70" width="1.80" height="1.1" fill="#6a9955"/>
<rect x="792.70" y="107.70" width="2.70" height="1.1" fill="#6a9955"/>
<rect x="796.30" y="107.70" width="0.90" height="1.1" fill="#6a9955"/>
<rect x="798.10" y="107.70" width="4.50" height="1.1" fill="#6a9955"/>
<rect x="803.50" y="107.70" width="5.40" height="1.1" fill="#6a9955"/>
<rect x="809.80" y="107.70" width="8.10" height="1.1" fill="#6a9955"/>
<rect x="818.80" y="107.70" width="5.40" height="1.1" fill="#6a9955"/>
<rect x="825.10" y="107.70" width="3.60" height="1.1" fill="#6a9955"/>
<rect x="829.60" y="107.70" width="7.20" height="1.1" fill="#6a9955"/>
<rect x="837.70" y="107.70" width="5.40" height="1.1" fill="#6a9955"/>
<rect x="844.00" y="107.70" width="3.60" height="1.1" fill="#6a9955"/>
<rect x="848.50" y="107.70" width="5.40" height="1.1" fill="#6a9955"/>
<rect x="782.80" y="109.50" width="1.80" height="1.1" fill="#6a9955"/>
<rect x="785.50" y="109.50" width="2.70" height="1.1" fill="#6a9955"/>
<rect x="789.10" y="109.50" width="1.80" height="1.1" fill="#6a9955"/>
<rect x="791.80" y="109.50" width="5.40" height="1.1" fill="#6a9955"/>
<rect x="782.80" y="113.10" width="1.80" height="1.1" fill="#6a9955"/>
<rect x="785.50" y="113.10" width="3.60" height="1.1" fill="#6a9955"/>
<rect x="790.00" y="113.10" width="4.50" height="1.1" fill="#6a9955"/>
<rect x="795.40" y="113.10" width="1.80" height="1.1" fill="#6a9955"/>
<rect x="798.10" y="113.10" width="2.70" height="1.1" fill="#6a9955"/>
<rect x="801.70" y="113.10" width="11.70" height="1.1" fill="#6a9955"/>
<rect x="814.30" y="113.10" width="2.70" height="1.1" fill="#6a9955"/>
<rect x="817.90" y="113.10" width="2.70" height="1.1" fill="#6a9955"/>
<rect x="821.50" y="113.10" width="5.40" height="1.1" fill="#6a9955"/>
<rect x="827.80" y="113.10" width="1.80" height="1.1" fill="#6a9955"/>
<rect x="830.50" y="113.10" width="4.50" height="1.1" fill="#6a9955"/>
<rect x="835.90" y="113.10" width="2.70" height="1.1" fill="#6a9955"/>
<rect x="839.50" y="113.10" width="5.40" height="1.1" fill="#6a9955"/>
<rect x="845.80" y="113.10" width="2.70" height="1.1" fill="#6a9955"/>
<rect x="849.40" y="113.10" width="3.60" height="1.1" fill="#6a9955"/>
<rect x="782.80" y="114.90" width="1.80" height="1.1" fill="#6a9955"/>
<rect x="785.50" y="114.90" width="3.60" height="1.1" fill="#6a9955"/>
<rect x="790.00" y="114.90" width="2.70" height="1.1" fill="#6a9955"/>
<rect x="793.60" y="114.90" width="5.40" height="1.1" fill="#6a9955"/>
<rect x="799.90" y="114.90" width="7.20" height="1.1" fill="#6a9955"/>
<rect x="808.00" y="114.90" width="1.80" height="1.1" fill="#6a9955"/>
<rect x="810.70" y="114.90" width="2.70" height="1.1" fill="#6a9955"/>
<rect x="814.30" y="114.90" width="5.40" height="1.1" fill="#6a9955"/>
<rect x="820.60" y="114.90" width="2.70" height="1.1" fill="#6a9955"/>
<rect x="824.20" y="114.90" width="3.60" height="1.1" fill="#6a9955"/>
<rect x="828.70" y="114.90" width="3.60" height="1.1" fill="#6a9955"/>
<rect x="833.20" y="114.90" width="2.70" height="1.1" fill="#6a9955"/>
<rect x="836.80" y="114.90" width="2.70" height="1.1" fill="#6a9955"/>
<rect x="840.40" y="114.90" width="6.30" height="1.1" fill="#6a9955"/>
<rect x="847.60" y="114.90" width="2.70" height="1.1" fill="#6a9955"/>
<rect x="782.80" y="116.70" width="1.80" height="1.1" fill="#6a9955"/>
<rect x="785.50" y="116.70" width="3.60" height="1.1" fill="#6a9955"/>
<rect x="790.00" y="116.70" width="1.80" height="1.1" fill="#6a9955"/>
<rect x="792.70" y="116.70" width="2.70" height="1.1" fill="#6a9955"/>
<rect x="796.30" y="116.70" width="4.50" height="1.1" fill="#6a9955"/>
<rect x="801.70" y="116.70" width="5.40" height="1.1" fill="#6a9955"/>
<rect x="808.00" y="116.70" width="1.80" height="1.1" fill="#6a9955"/>
<rect x="810.70" y="116.70" width="2.70" height="1.1" fill="#6a9955"/>
<rect x="814.30" y="116.70" width="5.40" height="1.1" fill="#6a9955"/>
<rect x="820.60" y="116.70" width="5.40" height="1.1" fill="#6a9955"/>
<rect x="826.90" y="116.70" width="1.80" height="1.1" fill="#6a9955"/>
<rect x="829.60" y="116.70" width="0.90" height="1.1" fill="#6a9955"/>
<rect x="831.40" y="116.70" width="5.40" height="1.1" fill="#6a9955"/>
<rect x="837.70" y="116.70" width="7.20" height="1.1" fill="#6a9955"/>
<rect x="845.80" y="116.70" width="2.70" height="1.1" fill="#6a9955"/>
<rect x="782.80" y="118.50" width="1.80" height="1.1" fill="#6a9955"/>
<rect x="785.50" y="118.50" width="5.40" height="1.1" fill="#6a9955"/>
<rect x="791.80" y="118.50" width="5.40" height="1.1" fill="#6a9955"/>
<rect x="798.10" y="118.50" width="7.20" height="1.1" fill="#6a9955"/>
<rect x="782.80" y="122.10" width="4.50" height="1.1" fill="#569cd6"/>
<rect x="788.20" y="122.10" width="5.40" height="1.1" fill="#4ec9b0"/>
<rect x="793.60" y="122.10" width="0.90" height="1.1" fill="#d4d4d4"/>
<rect x="795.40" y="122.10" width="5.40" height="1.1" fill="#d4d4d4"/>
<rect x="782.80" y="125.70" width="8.10" height="1.1" fill="#569cd6"/>
<rect x="782.80" y="127.50" width="14.40" height="1.1" fill="#4ec9b0"/>
<rect x="798.10" y="127.50" width="9.90" height="1.1" fill="#dcdcaa"/>
<rect x="808.00" y="127.50" width="1.80" height="1.1" fill="#d4d4d4"/>
<rect x="810.70" y="127.50" width="1.80" height="1.1" fill="#d4d4d4"/>
<rect x="813.40" y="127.50" width="14.40" height="1.1" fill="#4ec9b0"/>
<rect x="827.80" y="127.50" width="2.70" height="1.1" fill="#d4d4d4"/>
<rect x="781.00" y="129.30" width="0.90" height="1.1" fill="#d4d4d4"/>
<rect x="781.00" y="132.90" width="4.50" height="1.1" fill="#569cd6"/>
<rect x="786.40" y="132.90" width="14.40" height="1.1" fill="#4ec9b0"/>
<rect x="801.70" y="132.90" width="6.30" height="1.1" fill="#569cd6"/>
<rect x="808.90" y="132.90" width="4.50" height="1.1" fill="#4ec9b0"/>
<rect x="813.40" y="132.90" width="0.90" height="1.1" fill="#d4d4d4"/>
<rect x="814.30" y="132.90" width="9.00" height="1.1" fill="#4ec9b0"/>
<rect x="823.30" y="132.90" width="0.90" height="1.1" fill="#d4d4d4"/>
<rect x="825.10" y="132.90" width="0.90" height="1.1" fill="#d4d4d4"/>
<rect x="782.80" y="134.70" width="2.70" height="1.1" fill="#4ec9b0"/>
<rect x="786.40" y="134.70" width="7.20" height="1.1" fill="#d4d4d4"/>
<rect x="794.50" y="134.70" width="0.90" height="1.1" fill="#d4d4d4"/>
<rect x="796.30" y="134.70" width="0.90" height="1.1" fill="#b5cea8"/>
<rect x="797.20" y="134.70" width="0.90" height="1.1" fill="#d4d4d4"/>
<rect x="782.80" y="138.30" width="3.60" height="1.1" fill="#569cd6"/>
<rect x="787.30" y="138.30" width="15.30" height="1.1" fill="#dcdcaa"/>
<rect x="802.60" y="138.30" width="1.80" height="1.1" fill="#d4d4d4"/>
<rect x="805.30" y="138.30" width="0.90" height="1.1" fill="#d4d4d4"/>
<rect x="784.60" y="140.10" width="7.20" height="1.1" fill="#dcdcaa"/>
<rect x="791.80" y="140.10" width="2.70" height="1.1" fill="#d4d4d4"/>
<rect x="795.40" y="140.10" width="0.90" height="1.1" fill="#d4d4d4"/>
<rect x="786.40" y="141.90" width="9.90" height="1.1" fill="#d4d4d4"/>
<rect x="784.60" y="143.70" width="2.70" height="1.1" fill="#d4d4d4"/>
<rect x="782.80" y="145.50" width="0.90" height="1.1" fill="#d4d4d4"/>
<rect x="782.80" y="149.10" width="8.10" height="1.1" fill="#569cd6"/>
<rect x="782.80" y="150.90" width="5.40" height="1.1" fill="#4ec9b0"/>
<rect x="789.10" y="150.90" width="4.50" height="1.1" fill="#dcdcaa"/>
<rect x="793.60" y="150.90" width="0.90" height="1.1" fill="#d4d4d4"/>
<rect x="794.50" y="150.90" width="10.80" height="1.1" fill="#4ec9b0"/>
<rect x="806.20" y="150.90" width="7.20" height="1.1" fill="#d4d4d4"/>
<rect x="814.30" y="150.90" width="0.90" height="1.1" fill="#d4d4d4"/>
<rect x="784.60" y="152.70" width="5.40" height="1.1" fill="#c6a0c0"/>
<rect x="790.90" y="152.70" width="7.20" height="1.1" fill="#4ec9b0"/>
<rect x="798.10" y="152.70" width="0.90" height="1.1" fill="#d4d4d4"/>
<rect x="786.40" y="154.50" width="6.30" height="1.1" fill="#d4d4d4"/>
<rect x="793.60" y="154.50" width="5.40" height="1.1" fill="#4ec9b0"/>
<rect x="799.00" y="154.50" width="0.90" height="1.1" fill="#d4d4d4"/>
<rect x="788.20" y="156.30" width="5.40" height="1.1" fill="#d4d4d4"/>
<rect x="794.50" y="156.30" width="3.60" height="1.1" fill="#4ec9b0"/>
<rect x="798.10" y="156.30" width="14.40" height="1.1" fill="#d4d4d4"/>
<rect x="786.40" y="158.10" width="1.80" height="1.1" fill="#d4d4d4"/>
<rect x="789.10" y="158.10" width="1.80" height="1.1" fill="#8b8b8b"/>
<rect x="791.80" y="158.10" width="5.40" height="1.1" fill="#8b8b8b"/>
<rect x="786.40" y="159.90" width="4.50" height="1.1" fill="#d4d4d4"/>
<rect x="791.80" y="159.90" width="5.40" height="1.1" fill="#4ec9b0"/>
<rect x="797.20" y="159.90" width="0.90" height="1.1" fill="#d4d4d4"/>
<rect x="788.20" y="161.70" width="5.40" height="1.1" fill="#d4d4d4"/>
<rect x="794.50" y="161.70" width="5.40" height="1.1" fill="#4ec9b0"/>
<rect x="799.90" y="161.70" width="0.90" height="1.1" fill="#d4d4d4"/>
<rect x="790.00" y="163.50" width="16.20" height="1.1" fill="#d4d4d4"/>
<rect x="807.10" y="163.50" width="15.30" height="1.1" fill="#4ec9b0"/>
<rect x="822.40" y="163.50" width="7.20" height="1.1" fill="#d4d4d4"/>
<rect x="790.00" y="165.30" width="8.10" height="1.1" fill="#d4d4d4"/>
<rect x="799.00" y="165.30" width="0.90" height="1.1" fill="#d4d4d4"/>
<rect x="799.90" y="165.30" width="5.40" height="1.1" fill="#4ec9b0"/>
<rect x="805.30" y="165.30" width="1.80" height="1.1" fill="#d4d4d4"/>
<rect x="791.80" y="167.10" width="3.60" height="1.1" fill="#4ec9b0"/>
<rect x="795.40" y="167.10" width="0.90" height="1.1" fill="#d4d4d4"/>
<rect x="793.60" y="168.90" width="6.30" height="1.1" fill="#ce9178"/>
<rect x="800.80" y="168.90" width="6.30" height="1.1" fill="#ce9178"/>
<rect x="808.00" y="168.90" width="0.90" height="1.1" fill="#ce9178"/>
<rect x="808.90" y="168.90" width="7.20" height="1.1" fill="#9cdcfe"/>
<rect x="817.00" y="168.90" width="5.40" height="1.1" fill="#ce9178"/>
<rect x="822.40" y="168.90" width="0.90" height="1.1" fill="#d4d4d4"/>
<rect x="793.60" y="170.70" width="5.40" height="1.1" fill="#d4d4d4"/>
<rect x="799.90" y="170.70" width="4.50" height="1.1" fill="#4ec9b0"/>
<rect x="804.40" y="170.70" width="29.70" height="1.1" fill="#d4d4d4"/>
<rect x="791.80" y="172.50" width="1.80" height="1.1" fill="#d4d4d4"/>
<rect x="794.50" y="172.50" width="1.80" height="1.1" fill="#8b8b8b"/>
<rect x="797.20" y="172.50" width="3.60" height="1.1" fill="#8b8b8b"/>
<rect x="790.00" y="174.30" width="1.80" height="1.1" fill="#d4d4d4"/>
<rect x="792.70" y="174.30" width="1.80" height="1.1" fill="#8b8b8b"/>
<rect x="795.40" y="174.30" width="9.00" height="1.1" fill="#8b8b8b"/>
<rect x="788.20" y="176.10" width="1.80" height="1.1" fill="#d4d4d4"/>
<rect x="790.90" y="176.10" width="1.80" height="1.1" fill="#8b8b8b"/>
<rect x="793.60" y="176.10" width="5.40" height="1.1" fill="#8b8b8b"/>
<rect x="786.40" y="177.90" width="1.80" height="1.1" fill="#d4d4d4"/>
<rect x="789.10" y="177.90" width="1.80" height="1.1" fill="#8b8b8b"/>
<rect x="791.80" y="177.90" width="5.40" height="1.1" fill="#8b8b8b"/>
<rect x="786.40" y="179.70" width="18.90" height="1.1" fill="#d4d4d4"/>
<rect x="806.20" y="179.70" width="18.00" height="1.1" fill="#4ec9b0"/>
<rect x="824.20" y="179.70" width="0.90" height="1.1" fill="#d4d4d4"/>
<rect x="788.20" y="181.50" width="9.00" height="1.1" fill="#d4d4d4"/>
<rect x="798.10" y="181.50" width="16.20" height="1.1" fill="#d4d4d4"/>
<rect x="788.20" y="183.30" width="7.20" height="1.1" fill="#d4d4d4"/>
<rect x="796.30" y="183.30" width="9.90" height="1.1" fill="#ce9178"/>
<rect x="806.20" y="183.30" width="0.90" height="1.1" fill="#d4d4d4"/>
<rect x="788.20" y="185.10" width="5.40" height="1.1" fill="#d4d4d4"/>
<rect x="794.50" y="185.10" width="3.60" height="1.1" fill="#4ec9b0"/>
<rect x="798.10" y="185.10" width="0.90" height="1.1" fill="#d4d4d4"/>
<rect x="799.00" y="185.10" width="4.50" height="1.1" fill="#4ec9b0"/>
<rect x="803.50" y="185.10" width="5.40" height="1.1" fill="#d4d4d4"/>
<rect x="786.40" y="186.90" width="1.80" height="1.1" fill="#d4d4d4"/>
<rect x="789.10" y="186.90" width="1.80" height="1.1" fill="#8b8b8b"/>
<rect x="791.80" y="186.90" width="18.00" height="1.1" fill="#8b8b8b"/>
<rect x="784.60" y="188.70" width="1.80" height="1.1" fill="#d4d4d4"/>
<rect x="787.30" y="188.70" width="1.80" height="1.1" fill="#8b8b8b"/>
<rect x="790.00" y="188.70" width="7.20" height="1.1" fill="#8b8b8b"/>
<rect x="782.80" y="190.50" width="0.90" height="1.1" fill="#d4d4d4"/>
<rect x="781.00" y="192.30" width="0.90" height="1.1" fill="#d4d4d4"/>
  </svg>
  <div id="sbline"></div>
  <div id="sbthumb"></div>
  <div id="sbcursor"></div>
  <svg style="position:absolute;left:65.5px;top:563px" width="9" height="14" viewBox="0 0 9 14">
    <path d="M4.5 0.8 C1.8 0.8 0.6 2.8 0.6 4.6 C0.6 6.6 2.2 7.6 2.6 9.2 H6.4 C6.8 7.6 8.4 6.6 8.4 4.6 C8.4 2.8 7.2 0.8 4.5 0.8Z" fill="#f5c400"/>
    <rect x="2.7" y="9.6" width="3.6" height="3" rx="1" fill="#c5701a"/>
  </svg>
  <svg style="position:absolute;left:6px;top:598px" width="10" height="10" viewBox="0 0 10 10"><path d="M5 1.2 V8.8 M1.2 5 H8.8" stroke="#7a7a7a" stroke-width="1.2"/></svg>
  <div id="redge"></div>
  <div id="lstrip"></div>
</div>
<div class="btn" style="left:901.5px;top:94px;width:6px;height:28px"></div>
<div class="btn" style="left:901.5px;top:145px;width:6px;height:49px"></div>
<div class="btn" style="left:901.5px;top:201px;width:6px;height:50px"></div>
<div class="btn" style="left:1262px;top:144px;width:4.5px;height:50px"></div>
<div id="phone"></div>
<div id="screen">
  <div id="appbar">
    <div id="time">2:55</div>
    <div id="title">Flutter Demo Home Page</div>
    <svg style="position:absolute;left:250.3px;top:14px;overflow:visible" width="62" height="14" viewBox="0 0 62 14">
      <g fill="#1a4a8a" opacity="0.75"><rect x="-2.4" y="9" width="1.8" height="1.5"/><rect x="1.2" y="9" width="1.8" height="1.5"/><rect x="4.8" y="9" width="1.8" height="1.5"/><rect x="8.4" y="9" width="1.8" height="1.5"/></g>
      <path d="M16.8 4.8 A9 9 0 0 1 29.2 4.8" stroke="#081426" stroke-width="1.9" fill="none"/>
      <path d="M19 7.2 A6 6 0 0 1 27 7.2" stroke="#081426" stroke-width="1.9" fill="none"/>
      <path d="M20.8 9.6 L23 11.8 L25.2 9.6 A3 3 0 0 0 20.8 9.6Z" fill="#081426"/>
      <rect x="35.3" y="2.6" width="17.2" height="8" rx="2" fill="none" stroke="#173f78" stroke-width="1"/>
      <rect x="36.5" y="3.8" width="14.8" height="5.6" rx="0.6" fill="#000"/>
      <rect x="53.5" y="5" width="1.2" height="3" fill="#173f78"/>
    </svg>
  </div>
  <svg style="position:absolute;left:0;top:0" width="321" height="30" viewBox="0 0 321 30"><path d="M67.3 0 Q73.5 0 73.5 5.5 L73.5 11.5 A14.8 14.8 0 0 0 88.3 26.3 L230.8 26.3 A14.8 14.8 0 0 0 245.6 11.5 L245.6 5.5 Q245.6 0 251.8 0 Z" fill="#1b1b1b"/></svg>
  <div id="msg">Button clicked 0 times</div>
  <div id="fab">
    <svg width="46" height="46" viewBox="0 0 46 46" style="position:absolute;left:0;top:0"><path d="M23 16.5 V29 M16.5 22.8 H29.5" stroke="#fff" stroke-width="1.8"/></svg>
  </div>
  <div id="home"></div>
</div>
<svg id="cursor" width="16" height="20" viewBox="0 0 16 20">
  <path d="M2.3 2 V15.8 L5.5 12.8 L8 18 L10.2 17 L7.8 11.8 L12.3 11.5 Z" fill="#0a0a0a" stroke="#eeeeee" stroke-width="1.2" stroke-linejoin="round"/>
</svg>
</body></html>
